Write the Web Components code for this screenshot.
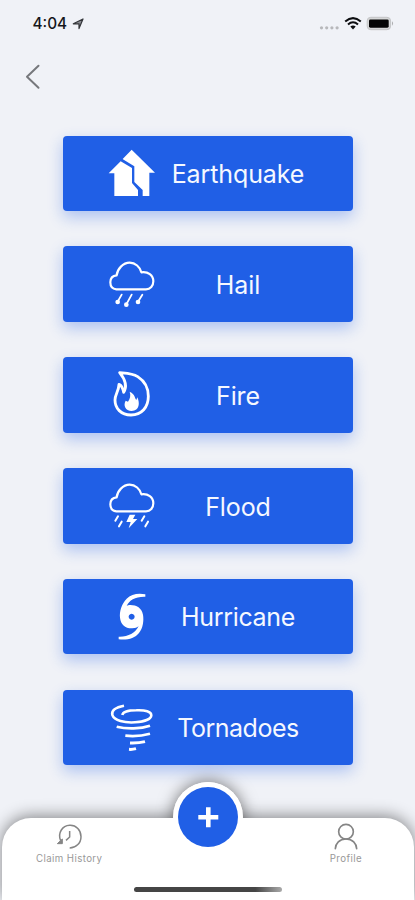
<!DOCTYPE html>
<html lang="en"><head><meta charset="utf-8"><title>Claim type</title>
<style>html,body{margin:0;height:100%;overflow:hidden}</style></head><body>
<claim-app></claim-app>
<script>
const define=(name,html)=>customElements.define(name,class extends HTMLElement{
  constructor(){super();const t=document.createElement('template');t.innerHTML=html;
    this.attachShadow({mode:'open'}).append(t.content.cloneNode(true));}
});

define('status-bar',`<style>
:host{display:flex;align-items:center;height:46px;box-sizing:border-box;padding:1px 20px 0 32.5px;color:#15161a}
.time{font-size:15.3px;font-weight:550;letter-spacing:0;line-height:20px;width:35.5px;white-space:nowrap}
.loc{margin-left:4px}.right{margin-left:auto;display:flex;align-items:center}
svg{display:block}
</style><span class="time">4:04</span>
<svg class="loc" width="13" height="14" viewBox="0 0 13 14"><path d="M1.3 6.8L11 2L7 11.6V6.8Z" fill="#8b8d92" stroke="#333539" stroke-width="1.2" stroke-linejoin="round"/></svg>
<svg class="right" width="76" height="18" viewBox="0 0 76 18">
<g fill="#b7b8bb"><circle cx="2.5" cy="12.8" r="1.6"/><circle cx="7.7" cy="12.8" r="1.6"/><circle cx="12.9" cy="12.8" r="1.6"/><circle cx="18.1" cy="12.8" r="1.6"/></g>
<g fill="none" stroke="#0c0d10" stroke-width="2"><path d="M26.2 6.5Q34 -.3 41.8 6.5"/><path d="M29 9.5Q34 5.1 39 9.5"/></g><path d="M31.3 11.5Q34 9.3 36.7 11.5L34 14.5Z" fill="#0c0d10"/>
<rect x="48.2" y="2.3" width="23.4" height="12.4" rx="3.6" fill="#d6d7d8" stroke="#c3c4c6"/><rect x="50" y="4.4" width="19.7" height="8.3" rx="1.4" fill="#050505"/><path d="M73 6.3Q75.2 8.5 73 10.7Z" fill="#aeafb1"/></svg>`);

define('back-button',`<style>:host{display:block;padding:18px 0 0 24px;height:71.7px}svg{display:block}</style>
<svg width="18" height="26" viewBox="0 0 18 26" fill="none" stroke="#76787c" stroke-width="2" stroke-linecap="round" stroke-linejoin="round"><path d="M14.5 1.8L3 12.8L14.5 23.8"/></svg>`);

const cloud='<path d="M64 118C51 117 46 108 46 97C46 84 54 77 65 76C67 57 84 38 104 38C121 38 135 51 139 67C159 64 175 76 175 94C175 108 166 118 153 118Z" fill="none" stroke="#fff" stroke-width="6.5" stroke-linejoin="round"/>';
const icons={
 earthquake:'<g fill="#fff"><path d="M110 29L180 98H163V168H143V150L118 126V79L86 59L83 57Z"/><path d="M77 64L111 84V129L129 150V168H58V100H41Z"/></g>',
 hail:cloud+'<g stroke="#fff" stroke-width="5.5" stroke-linecap="round"><path d="M80 134L68 155M110 134L94 163M142 134L129 155"/></g><g fill="#fff"><circle cx="68" cy="156" r="7"/><circle cx="94" cy="164" r="7"/><circle cx="129" cy="156" r="7"/></g>',
 fire:'<path d="M74 35C96 37 112 37 128 47C150 61 160 82 160 106C160 139 140 162 108 162C78 162 60 142 60 117C60 100 71 92 72 70C81 73 84 83 86 94C96 78 91 56 74 35Z" fill="none" stroke="#fff" stroke-width="8.5" stroke-linejoin="round"/><path d="M104 92C121 100 119 112 124 117L127 109C135 126 134 149 110 150C91 150 84 132 92 119L99 122C105 113 108 104 104 92Z" fill="#fff"/>',
 flood:cloud+'<g stroke="#fff" stroke-width="6" stroke-linecap="round"><path d="M69 133L61 146M80 149L72 163M148 133L140 146M159 149L151 163"/></g><path d="M104 128H121L114 141H127L101 169L107 150H94Z" fill="#fff"/>',
 hurricane:'<path fill="#fff" fill-rule="evenodd" d="M151 34C130 30 108 33 95 47C80 62 73 84 75 104C77 124 91 137 112 136C121 136 126 134 131 130C120 151 99 162 71 161V169C98 172 119 166 132 150C144 135 147 113 144 95C140 75 125 66 106 66C101 66 98 67 95 69C103 51 121 40 151 41ZM110 92A9 9 0 1 1 109.9 92Z"/>',
 tornado:'<g fill="none" stroke="#fff"><path d="M87 35C62 40 48 49 52 63C58 80 88 87 120 85C148 83 168 75 169 64C169 52 151 48 124 49C99 49 83 55 82 63" stroke-width="7.5"/><path d="M65 98C95 106 137 105 165 95" stroke-width="8"/><path d="M91 125Q130 129 165 119" stroke-width="8"/><path d="M105 147Q130 148 150 143M102 166Q112 167 123 164" stroke-width="9"/></g>'
};
customElements.define('peril-card',class extends HTMLElement{
 constructor(){super();this.attachShadow({mode:'open'}).innerHTML=`<style>
:host{display:flex;align-items:center;height:75.5px;box-sizing:border-box;padding-left:32.5px;border-radius:4px;background:#205fe6;box-shadow:0 6px 15px rgba(32,95,230,.33);color:#f5f8ff}
svg{display:block;flex:none;margin-top:2.5px}
span{width:146px;text-align:center;font-size:25px;font-weight:430;line-height:32px;padding-top:1.6px;letter-spacing:var(--track,-.1px);white-space:nowrap}
</style><svg width="70" height="70" viewBox="0 0 210 210">${icons[this.getAttribute('icon')]||''}</svg><span><slot></slot></span>`;}
});

define('nav-item',`<style>:host{display:flex;flex-direction:column;align-items:center;color:#999;font-size:9.7px;line-height:14px;letter-spacing:.4px;white-space:nowrap}
.i{height:29.3px}</style><div class="i"><slot name="icon"></slot></div><span><slot></slot></span>`);

define('bottom-nav',`<style>
:host{display:block;height:82.5px;position:relative;margin:0 1px 0 2px}
.halo,.cover{position:absolute;border-radius:50%;width:70px;height:70px;left:171px;top:-35.5px;background:#fff}
.halo{box-shadow:0 -1px 16px 0 rgba(0,0,0,.5)}
.bar{position:relative;height:100%;box-sizing:border-box;background:#fff;border-radius:29px 29px 0 0;box-shadow:0 -2px 16px 0 rgba(0,0,0,.45);display:flex;justify-content:space-between;padding:5px 52px 0 34px}
.plus{position:absolute;left:4.7px;top:4.7px;width:60.6px;height:60.6px;border-radius:50%;background:#205fe6}
.home{position:absolute;left:132px;top:69.5px;width:148px;height:5px;border-radius:3px;background:linear-gradient(90deg,#454545 82%,#aaa)}
svg{display:block}
</style><div class="halo"></div><div class="bar">
<nav-item><svg slot="icon" width="28" height="27" viewBox="0 0 84 81" fill="none" stroke="#858585" stroke-width="4.5"><path d="M17 53C7 30 22 8 44 7C64 6 78 22 78 41C78 61 62 75 44 75"/><path d="M44 24V42L33 52"/><path d="M7 62H22V48Z" fill="#858585" stroke-width="3"/></svg>Claim History</nav-item>
<nav-item><svg slot="icon" width="26" height="27" viewBox="0 0 78 81" fill="none" stroke="#858585" stroke-width="5" stroke-linecap="round"><circle cx="39" cy="26" r="22"/><path d="M7 77C8 61 19 48 39 48S70 61 71 77"/></svg>Profile</nav-item></div>
<div class="cover"><svg class="plus" viewBox="0 0 60.6 60.6"><path d="M30.3 20.2V40.2M20.3 30.2H40.3" stroke="#fff" stroke-width="4.6"/></svg></div><div class="home"></div>`);

define('claim-app',`<style>
:host{display:flex;flex-direction:column;width:415px;height:900px;overflow:hidden;background:#f0f2f7;font-family:Inter,"Liberation Sans",sans-serif}
main{display:flex;flex-direction:column;gap:35.3px;padding:0 62px 0 62.5px}
[icon=hurricane]{--track:-.3px}[icon=tornado]{--track:-.5px}
bottom-nav{margin-top:auto}
</style><status-bar></status-bar><back-button></back-button><main>
<peril-card icon="earthquake">Earthquake</peril-card>
<peril-card icon="hail">Hail</peril-card>
<peril-card icon="fire">Fire</peril-card>
<peril-card icon="flood">Flood</peril-card>
<peril-card icon="hurricane">Hurricane</peril-card>
<peril-card icon="tornado">Tornadoes</peril-card>
</main><bottom-nav></bottom-nav>`);
</script></body></html>
